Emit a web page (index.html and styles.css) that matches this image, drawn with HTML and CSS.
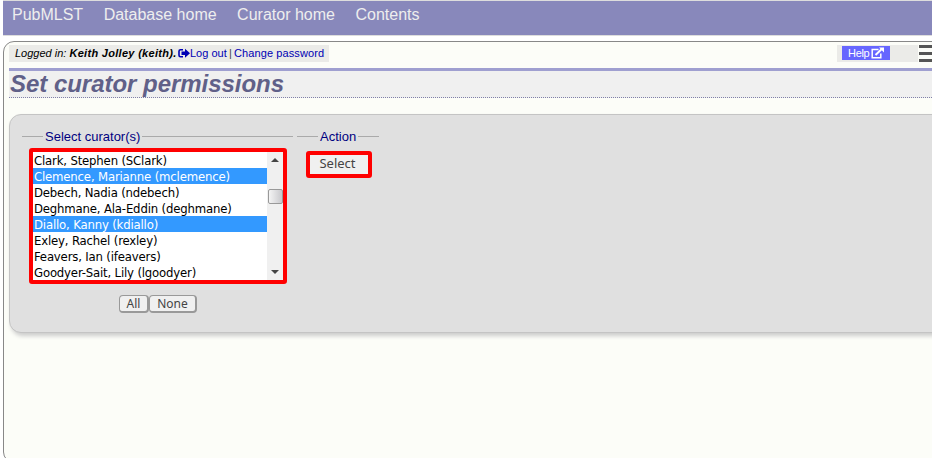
FILE: index.html
```html
<!DOCTYPE html>
<html lang="en">
<head>
<meta charset="utf-8">
<title>Set curator permissions</title>
<link rel="stylesheet" href="styles.css">
</head>
<body>
<nav class="menu"><a>PubMLST</a><a>Database home</a><a>Curator home</a><a>Contents</a></nav>
<main class="page">
  <div class="topbar">
    <div class="login"><span class="who">Logged in: <b>Keith Jolley (keith).</b></span><svg class="exit" viewBox="0 0 12 11"><path d="M5 1.8H2.5Q1 1.8 1 3.3v3.9q0 1.5 1.5 1.5H5" fill="none" stroke="#0000b4" stroke-width="1.6"/><path d="M3.5 3.6H7V.8l5 4.5-5 4.5V7H3.5z" fill="#0000b4"/></svg><a class="logout">Log out</a><span class="bar">|</span><a class="password">Change password</a></div>
    <div class="tools"><a class="help">Help<svg viewBox="0 0 14 12"><path d="M7.5 2.5H1.2v8.3h8.6V6.5" fill="none" stroke="#fff" stroke-width="1.5"/><path d="M4.5 8L10.5 2.3" stroke="#fff" stroke-width="2"/><path d="M8 .5h5v5z" fill="#fff"/></svg></a></div>
    <div class="burger"><i></i><i></i><i></i></div>
  </div>
  <h1>Set curator permissions</h1>
  <form class="panel">
    <section class="curators">
      <div class="legend"><span>Select curator(s)</span></div>
      <div class="listbox">
        <ul>
          <li><span>Clark, Stephen (SClark)</span></li>
          <li class="on"><span>Clemence, Marianne (mclemence)</span></li>
          <li><span>Debech, Nadia (ndebech)</span></li>
          <li><span>Deghmane, Ala-Eddin (deghmane)</span></li>
          <li class="on"><span>Diallo, Kanny (kdiallo)</span></li>
          <li><span>Exley, Rachel (rexley)</span></li>
          <li><span>Feavers, Ian (ifeavers)</span></li>
          <li><span>Goodyer-Sait, Lily (lgoodyer)</span></li>
        </ul>
        <div class="scroll"><i class="up"></i><i class="thumb"></i><i class="down"></i></div>
      </div>
      <div class="buttons"><button type="button" class="all">All</button><button type="button" class="none">None</button></div>
    </section>
    <section class="action">
      <div class="legend"><span>Action</span></div>
      <button type="button" class="select">Select</button>
    </section>
  </form>
</main>
</body>
</html>
```
FILE: styles.css
```css
* { box-sizing: border-box; }
html { overflow: hidden; }
body { margin: 0; height: 458px; overflow: hidden; background: #fff; font-family: "Liberation Sans", Arial, sans-serif; }
.menu { height: 36px; margin-left: 3px; width: 940px; background: #8888bb; border-top: 1px solid #ddd; border-bottom: 1px solid #ddd; display: flex; gap: 20.5px; padding: 4px 0 0 9px; font-size: 16px; line-height: 19px; color: #eee; }
.page { width: 950px; height: 422px; margin: 5px 0 0 3px; padding: 3px 0 0 5px; border: 1px solid #888; border-radius: 11px; background: #fcfdf8; }
.topbar { display: flex; height: 17px; }
.login { width: 320px; background: #ebebe8; display: flex; padding-left: 6px; font-size: 11px; line-height: 17px; white-space: nowrap; }
.who { width: 163px; font-style: italic; color: #000; }
.who b { letter-spacing: 0.3px; }
.exit { width: 12px; height: 11px; margin-top: 3px; }
.login a { color: #0000b4; }
.logout { width: 39px; }
.bar { width: 5px; color: #444; }
.password { letter-spacing: 0.1px; }
.tools { margin-left: 508px; width: 81px; background: #ebebe8; padding: 1px 0 0 5px; }
.help { display: flex; width: 48px; height: 14px; background: #66f; color: #fff; font-size: 11px; line-height: 15px; padding-left: 6px; letter-spacing: -0.3px; }
.help svg { width: 14px; height: 12px; margin: 1px 0 0 2px; }
.burger { width: 24px; margin-left: 1px; display: flex; flex-direction: column; gap: 4px; }
.burger i { height: 3px; background: #555; }
h1 { margin: 6px 0 0; height: 30px; border-top: 3px solid #9f9fd0; border-bottom: 1px dotted #8080a8; background: #f0f0f0; font-size: 24px; line-height: 26px; font-style: italic; color: #606088; padding-left: 1px; white-space: nowrap; letter-spacing: -0.03px; }
.panel { margin: 16px 0 0; width: 950px; height: 219px; border: 1px solid #c4c4c4; border-radius: 12px; background: #e0e0e0; box-shadow: 2px 3px 4px #ccc; display: flex; gap: 4px; padding: 13px 0 0 12px; }
.curators { width: 271px; }
.action { width: 82px; }
.legend { display: flex; align-items: center; height: 16px; font-size: 13px; color: #000080; white-space: nowrap; }
.legend::before { content: ""; width: 21px; height: 1px; background: #aaa; margin-right: 2px; flex: none; }
.legend::after { content: ""; flex: 1; height: 1px; background: #aaa; margin-left: 2px; }
.listbox { width: 258px; height: 136px; margin: 4px 0 0 7px; border: 4px solid #f00; border-radius: 3px; background: #fff; display: flex; }
ul { list-style: none; margin: 0; padding: 0; width: 234px; font: 13px/18px "DejaVu Sans Condensed", "DejaVu Sans", sans-serif; font-stretch: condensed; letter-spacing: -0.17px; color: #000; white-space: nowrap; }
li { height: 16px; padding-left: 1px; }
.on { background: #39f; color: #fff; }
.scroll { width: 16px; background: #f0f0f0; display: flex; flex-direction: column; align-items: center; }
.up { border: 4px solid transparent; border-top: 0; border-bottom: 4px solid #444; margin-top: 6px; }
.down { border: 4px solid transparent; border-bottom: 0; border-top: 4px solid #444; margin-top: 66px; }
.thumb { width: 15px; height: 15px; margin-top: 27px; border: 1px solid #999; border-radius: 2px; background: linear-gradient(90deg, #f4f4f4, #c8c8cc); }
button { margin: 0; padding: 0; color: #444; background: #f0f0f0; white-space: nowrap; }
.buttons { display: flex; margin: 11px 0 0 97px; }
.buttons button { height: 18px; border: 1px solid #999; border-right-width: 2px; border-bottom-width: 2px; border-radius: 4px; font: 12px/14px "Noto Sans", sans-serif; }
.all { width: 30px; }
.none { width: 48px; }
.select { display: block; width: 66px; height: 27px; margin: 7px 0 0 9px; border: 4px solid #f00; border-radius: 3px; font: 13px/14px "Noto Sans", sans-serif; padding-bottom: 4px; padding-right: 3px; }
```
